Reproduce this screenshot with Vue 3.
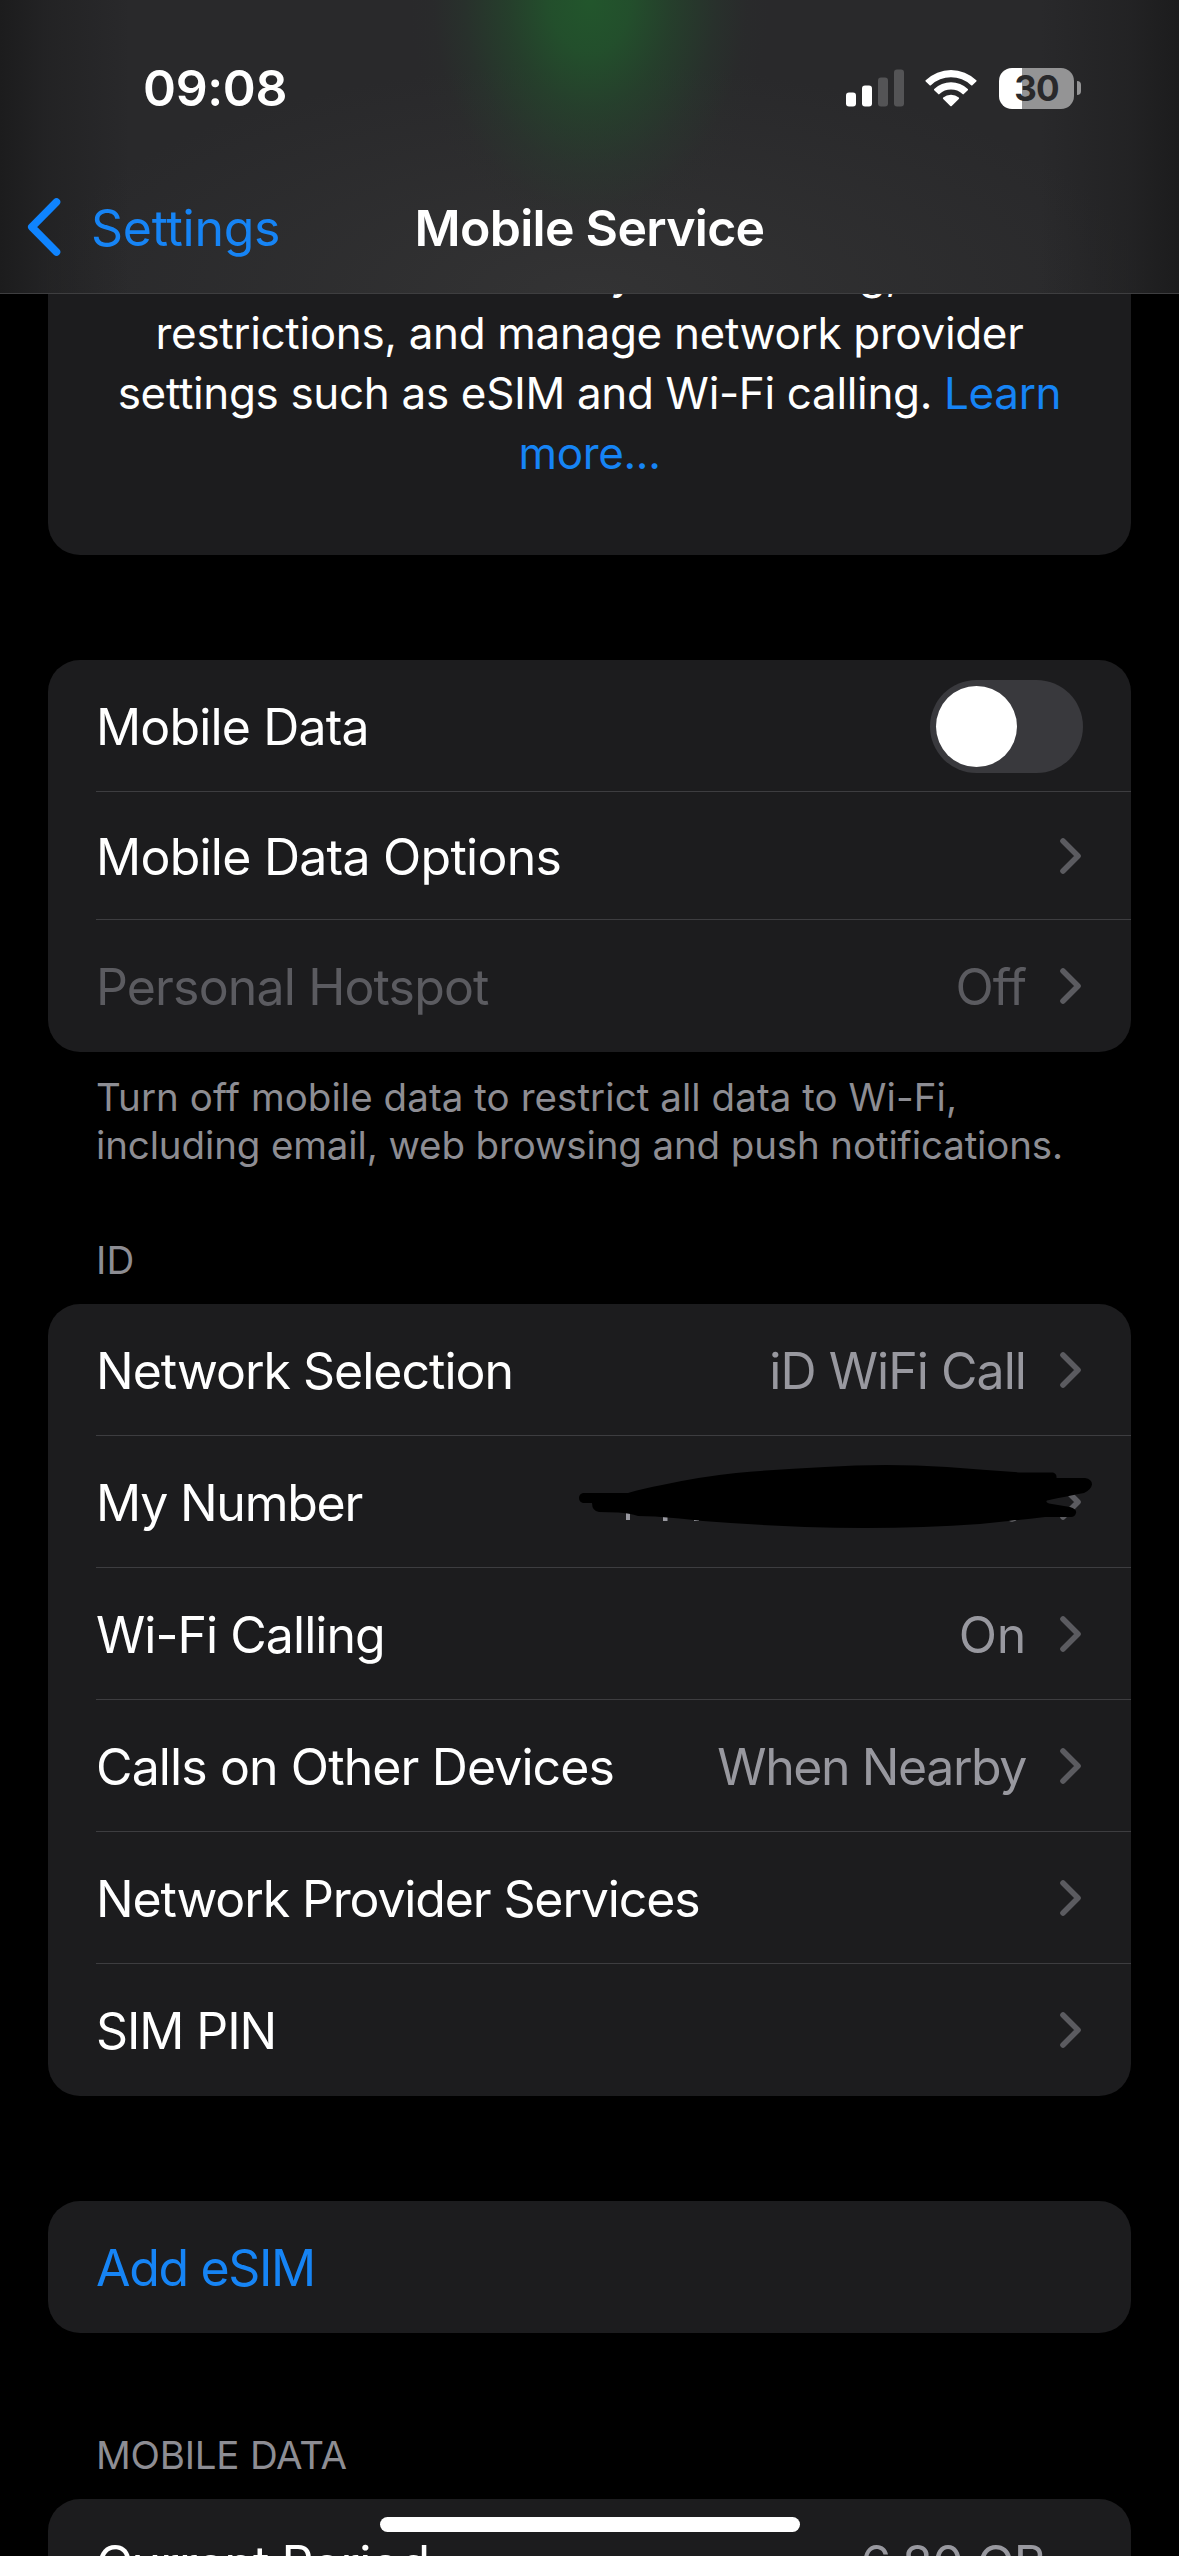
<script setup>
const dataRows = [
  { label: 'Mobile Data', toggle: true, tracking: -0.85 },
  { label: 'Mobile Data Options', chevron: true, short: true, tracking: -0.75 },
  { label: 'Personal Hotspot', value: 'Off', chevron: true, disabled: true, tracking: -0.85 },
]

const idRows = [
  { label: 'Network Selection', value: 'iD WiFi Call', chevron: true, tracking: -1, valueTracking: -0.95 },
  { label: 'My Number', scribble: true, chevron: true, tracking: -1.23 },
  { label: 'Wi-Fi Calling', value: 'On', chevron: true, tracking: -0.96, valueTracking: -0.3 },
  { label: 'Calls on Other Devices', value: 'When Nearby', chevron: true, tracking: -0.89, valueTracking: -1.42 },
  { label: 'Network Provider Services', chevron: true, tracking: -1.14 },
  { label: 'SIM PIN', chevron: true, tracking: -1.1 },
]

const groups = [
  { id: 'data', rows: dataRows },
  { id: 'id', rows: idRows },
]

const spacing = (px) => ({ letterSpacing: `${px ?? -0.9}px` })
</script>

<template>
  <div class="screen">
    <header class="header">
      <div class="status">
        <span class="time">09:08</span>
        <div class="indicators">
          <svg class="signal" width="58" height="38" viewBox="0 0 58 38">
            <rect x="0" y="23.500" width="10" height="14" rx="3" fill="#fff" />
            <rect x="16" y="16.500" width="10" height="21" rx="3" fill="#fff" />
            <rect x="32" y="8.500" width="10" height="29" rx="3" fill="#545456" />
            <rect x="48" y="0.500" width="10" height="37" rx="3" fill="#545456" />
          </svg>
          <svg class="wifi" width="52" height="38" viewBox="0 0 52 38">
            <path d="M.7 11.2a36.500 36.500 0 0 1 50.600 0 .9.9 0 0 1 0 1.300l-3.900 3.700a1 1 0 0 1-1.300 0 29.300 29.300 0 0 0-40.200 0 1 1 0 0 1-1.300 0L.7 12.500a.9.9 0 0 1 0-1.300Z" fill="#fff" />
            <path d="M9.200 19.900a24.500 24.500 0 0 1 33.600 0 .9.9 0 0 1 0 1.300l-4 3.900a1 1 0 0 1-1.300 0 17 17 0 0 0-23 0 1 1 0 0 1-1.300 0l-4-3.900a.9.9 0 0 1 0-1.300Z" fill="#fff" />
            <path d="M18.200 28.600a12 12 0 0 1 15.600 0 1 1 0 0 1 0 1.400l-7.100 7a1 1 0 0 1-1.400 0l-7.100-7a1 1 0 0 1 0-1.400Z" fill="#fff" />
          </svg>
          <div class="battery"><span>30</span></div>
          <i class="nub"></i>
        </div>
      </div>
      <div class="nav">
        <div class="back">
          <svg width="34" height="60" viewBox="0 0 34 60">
            <path d="M29.500 5 4.800 30l24.700 25" fill="none" stroke="#0f84ff" stroke-width="7.600" stroke-linecap="round" stroke-linejoin="round" />
          </svg>
          <span>Settings</span>
        </div>
        <h1>Mobile Service</h1>
      </div>
    </header>

    <section class="card intro">
      <p>
        Find out how much data you are using, set data<br />
        restrictions, and manage network provider<br />
        settings such as eSIM and Wi-Fi calling. <a>Learn<br />more...</a>
      </p>
    </section>

    <template v-for="group in groups" :key="group.id">
      <h2 v-if="group.id === 'id'" class="caption id-caption">ID</h2>
      <section class="card" :class="group.id">
        <div
          v-for="row in group.rows"
          :key="row.label"
          class="row"
          :class="{ short: row.short, disabled: row.disabled }"
        >
          <span class="label" :style="spacing(row.tracking)">{{ row.label }}</span>
          <span v-if="row.value" class="value" :style="spacing(row.valueTracking)">{{ row.value }}</span>
          <span v-if="row.toggle" class="toggle"><i></i></span>
          <svg v-if="row.chevron" class="chevron" width="27" height="40" viewBox="0 0 27 40">
            <path d="M7 5l15 15L7 35" fill="none" stroke="#5b5b60" stroke-width="5.600" stroke-linecap="round" stroke-linejoin="round" />
          </svg>
          <svg v-if="row.scribble" class="scribble" width="530" height="76" viewBox="572 1460 530 76">
            <g fill="#98989f">
              <rect x="626" y="1508" width="4" height="12" />
              <rect x="663" y="1514" width="4.500" height="7" />
              <rect x="694" y="1515" width="5" height="6" />
              <path d="M1004 1517q8 9 16 0z" />
            </g>
            <path
              d="M583 1493H628C638 1490 650 1487 662 1485Q698 1477 736 1473Q780 1469 825 1467Q886 1463 947 1467Q985 1470 1021 1472.500H1053Q1057 1474 1056.500 1478H1085Q1092 1479 1092 1484.500Q1091 1490 1084 1493Q1068 1496 1047 1500.500Q1045 1502 1049 1503.500L1070 1507Q1077 1509 1076 1513Q1075 1517 1071 1517H1045Q1012 1521 980 1524Q952 1526 923 1527Q866 1529 805 1527Q754 1525 703 1521Q680 1518 655 1516.500L638 1516Q630 1513 618 1512.500L599 1512Q592 1511 592 1503H583Q579 1502 579 1498Q579 1494 583 1493Z"
              fill="#000"
            />
          </svg>
        </div>
      </section>
      <p v-if="group.id === 'data'" class="footnote">
        Turn off mobile data to restrict all data to Wi-Fi,<br />
        <span>including email, web browsing and push notifications.</span>
      </p>
    </template>

    <section class="card esim">
      <div class="row"><span class="label link" :style="spacing(-1.35)">Add eSIM</span></div>
    </section>

    <h2 class="caption usage-caption">MOBILE DATA</h2>
    <section class="card usage">
      <div class="row">
        <span class="label">Current Period</span>
        <span class="value">6.80 GB</span>
      </div>
    </section>

    <i class="home"></i>
  </div>
</template>

<style>
body {
  margin: 0;
  background: #000;
}
</style>

<style scoped>
.screen {
  position: relative;
  width: 1179px;
  height: 2556px;
  overflow: hidden;
  background: #000;
  color: #fff;
  font-family: Inter, "Liberation Sans", sans-serif;
  font-size: 50px;
  letter-spacing: -0.9px;
}

h1, h2, p {
  margin: 0;
  font-weight: 400;
}

.header {
  position: relative;
  z-index: 2;
  box-sizing: border-box;
  height: 294px;
  border-bottom: 1px solid #3e3e40;
  background:
    radial-gradient(ellipse 180px 240px at 590px 0, rgba(34, 86, 44, 1) 0%, rgba(34, 83, 44, 0.9) 22%, rgba(35, 76, 44, 0.62) 45%, rgba(38, 66, 46, 0.3) 70%, rgba(42, 52, 45, 0.1) 87%, rgba(42, 48, 44, 0) 100%),
    linear-gradient(90deg, #1c1c1d 0, rgba(28, 28, 29, 0.5) 45px, rgba(28, 28, 29, 0) 130px, rgba(28, 28, 29, 0) 1040px, rgba(28, 28, 29, 0.5) 1130px, #1c1c1d 100%),
    radial-gradient(ellipse 560px 230px at 590px 294px, #333334 0%, rgba(49, 49, 50, 0.65) 45%, rgba(41, 41, 43, 0) 100%),
    #29292b;
}

.status {
  display: flex;
  justify-content: space-between;
  align-items: center;
  height: 176px;
  padding: 0 98px 0 143px;
}

.time {
  font-weight: 600;
  letter-spacing: -0.35px;
}

.indicators {
  display: flex;
  align-items: center;
}

.wifi {
  margin: 0 22px 0 21px;
}

.battery {
  display: flex;
  align-items: center;
  justify-content: center;
  width: 75px;
  height: 41px;
  border-radius: 13px;
  background: linear-gradient(90deg, #fff 23px, #949495 23px);
  color: #29292b;
  font-size: 35px;
  font-weight: 700;
  letter-spacing: -0.8px;
}

.nub {
  width: 4px;
  height: 14px;
  margin-left: 3px;
  border-radius: 0 5px 5px 0;
  background: #949495;
}

.nav {
  display: grid;
  grid-template-columns: 1fr auto 1fr;
  align-items: center;
  height: 104px;
}

.back {
  display: flex;
  align-items: center;
  padding-left: 27px;
  color: #1684f5;
  line-height: 60px;
  letter-spacing: -0.29px;
}

.back svg {
  margin: -2px 30px 0 0;
}

.back span {
  margin-top: -1px;
}

h1 {
  font-size: 50px;
  font-weight: 600;
  line-height: 60px;
  letter-spacing: -0.72px;
}

.card {
  margin: 0 48px;
  border-radius: 32px;
  background: #1c1c1e;
}

.intro {
  height: 261px;
  margin-bottom: 105px;
  border-radius: 0 0 32px 32px;
  display: flow-root;
}

.intro p {
  margin-top: -51px;
  font-size: 44px;
  line-height: 60px;
  letter-spacing: -0.34px;
  text-align: center;
  white-space: nowrap;
}

.intro a,
.link {
  color: #1684f5;
}

.row {
  position: relative;
  display: flex;
  align-items: center;
  height: 132px;
  padding: 0 48px;
}

.row.short {
  height: 128px;
}

.row:not(:last-child)::after {
  content: "";
  position: absolute;
  left: 48px;
  right: 0;
  bottom: 0;
  height: 1px;
  background: #3d3d40;
}

.label {
  flex: 1;
  padding-top: 1px;
  white-space: nowrap;
}

.value {
  padding-top: 1px;
  color: #98989f;
}

.value + .chevron {
  margin-left: 30px;
}

.disabled .label,
.disabled .value {
  color: #5b5b60;
}

.toggle {
  box-sizing: border-box;
  width: 153px;
  height: 93px;
  padding: 6px;
  border-radius: 47px;
  background: #39393d;
}

.toggle i {
  display: block;
  width: 81px;
  height: 81px;
  border-radius: 50%;
  background: #fff;
}

.scribble {
  position: absolute;
  left: 524px;
  top: 24px;
}

.footnote,
.caption {
  padding: 0 96px;
  color: #8d8d93;
  font-size: 38.500px;
  line-height: 48px;
  letter-spacing: 0.06px;
  white-space: nowrap;
}

.footnote {
  padding-top: 21px;
}

.footnote span {
  letter-spacing: -0.13px;
}

.id-caption {
  margin: 67px 0 20px;
}

.esim {
  margin-top: 105px;
}

.usage-caption {
  margin: 98px 0 20px;
  letter-spacing: -0.23px;
}

.usage .row {
  height: 128px;
  padding-right: 85px;
}

.usage .value {
  letter-spacing: -0.5px;
}

.home {
  position: absolute;
  left: 380px;
  bottom: 24px;
  width: 420px;
  height: 15px;
  border-radius: 8px;
  background: #fff;
}
</style>
